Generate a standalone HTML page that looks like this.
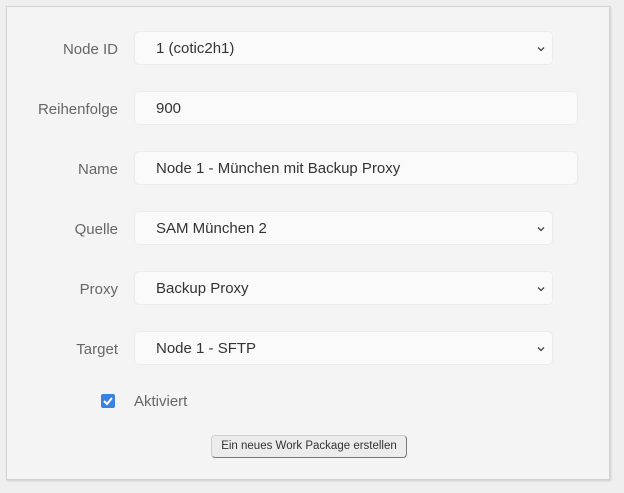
<html><head><style>
body{margin:0;width:624px;height:493px;background:#efefef;font-family:"Liberation Sans",sans-serif;position:relative;overflow:hidden}
.panel{position:absolute;left:6px;top:6px;width:602px;height:472px;background:#f4f4f4;border:1px solid #d2d2d2;box-shadow:1px 1px 2px #ccc}
.lbl{position:absolute;right:506px;font-size:15px;color:#666;width:110px;text-align:right}
.box{position:absolute;left:134px;height:34px;background:#fafafa;border:1px solid #ececec;border-radius:5px;box-sizing:border-box;font-size:15px;color:#333;padding-left:21px;line-height:34px}
.chev{position:absolute;right:6px;top:0}
</style></head><body>
<div class="panel"></div>
<div class="lbl" style="top:41px">Node ID</div>
<div class="box" style="top:31px;width:419px">1 (cotic2h1)<svg class="chev" style="top:13px" width="10" height="8"><path d="M2 2.5l3 3 3-3" stroke="#444" stroke-width="1.3" fill="none"/></svg></div>
<div class="lbl" style="top:101px">Reihenfolge</div>
<div class="box" style="top:91px;width:444px">900</div>
<div class="lbl" style="top:161px">Name</div>
<div class="box" style="top:151px;width:444px">Node 1 - München mit Backup Proxy</div>
<div class="lbl" style="top:221px">Quelle</div>
<div class="box" style="top:211px;width:419px">SAM München 2<svg class="chev" style="top:13px" width="10" height="8"><path d="M2 2.5l3 3 3-3" stroke="#444" stroke-width="1.3" fill="none"/></svg></div>
<div class="lbl" style="top:281px">Proxy</div>
<div class="box" style="top:271px;width:419px">Backup Proxy<svg class="chev" style="top:13px" width="10" height="8"><path d="M2 2.5l3 3 3-3" stroke="#444" stroke-width="1.3" fill="none"/></svg></div>
<div class="lbl" style="top:341px">Target</div>
<div class="box" style="top:331px;width:419px">Node 1 - SFTP<svg class="chev" style="top:13px" width="10" height="8"><path d="M2 2.5l3 3 3-3" stroke="#444" stroke-width="1.3" fill="none"/></svg></div>
<div style="position:absolute;left:101px;top:394px;width:14px;height:14px;background:#3b82e0;border-radius:2px"><svg width="14" height="14"><path d="M3 7l3 3 5-6" stroke="#fff" stroke-width="2" fill="none"/></svg></div>
<div style="position:absolute;left:134px;top:393px;font-size:15px;color:#666">Aktiviert</div>
<div style="position:absolute;left:211px;top:435px;width:196px;height:23px;box-sizing:border-box;background:#ececec;border:1px solid #ccc;border-right-color:#777;border-bottom-color:#777;border-radius:4px;font-size:11.5px;color:#333;text-align:center;line-height:21px">Ein neues Work Package erstellen</div>
</body></html>
